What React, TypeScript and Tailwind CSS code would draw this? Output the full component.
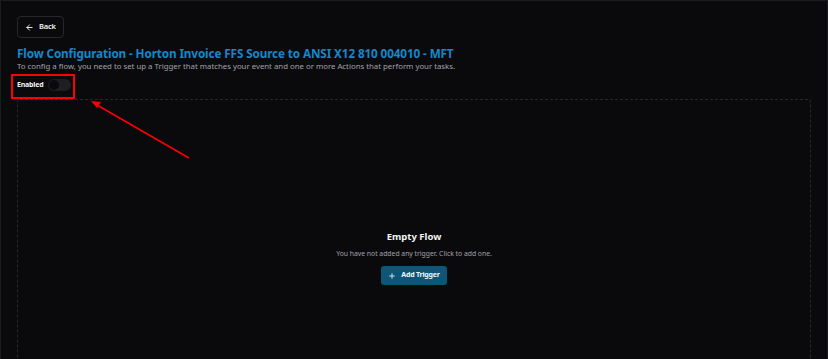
import React from "react";

function ArrowLeft() {
  return (
    <svg className="h-[9px] w-[9px]" viewBox="0 0 24 24" fill="none" stroke="currentColor" strokeWidth="2.5" strokeLinecap="round" strokeLinejoin="round">
      <path d="M19 12H5" />
      <path d="M12 19l-7-7 7-7" />
    </svg>
  );
}

function Plus() {
  return (
    <svg className="h-[8px] w-[8px]" viewBox="0 0 24 24" fill="none" stroke="currentColor" strokeWidth="2.5" strokeLinecap="round">
      <path d="M12 5v14" />
      <path d="M5 12h14" />
    </svg>
  );
}

export default function App() {
  return (
    <div
      className="relative h-[359px] w-[828px] overflow-hidden border-l border-r border-t border-[#1c1c20] bg-[#0a0a0c] text-white"
      style={{ fontFamily: '"Noto Sans", "Open Sans", sans-serif' }}
    >
      <div className="flex h-full flex-col px-[16px] pt-[15px]">
        <div>
          <button className="flex h-[22px] items-center gap-[5px] rounded-[4px] border border-[#27272a] px-[7px] text-[7.5px] font-semibold tracking-[-0.2px] text-zinc-100">
            <ArrowLeft />
            Back
          </button>
        </div>

        <h1 className="mt-[7px] text-[11.7px] font-bold leading-[16px] tracking-[-0.1px] text-[#1488cb]">
          Flow Configuration - Horton Invoice FFS Source to ANSI X12 810 004010 - MFT
        </h1>
        <p className="text-[7.8px] leading-[11px] text-[#a1a1aa]">
          To config a flow, you need to set up a Trigger that matches your event and one or more Actions that perform your tasks.
        </p>

        <div className="mt-[7px] flex items-center gap-[5px]">
          <span className="text-[7px] font-bold tracking-[-0.2px] text-zinc-100">Enabled</span>
          <span className="relative h-[12px] w-[23px] rounded-full bg-[#1f1f23]">
            <span className="absolute left-[1px] top-[1px] h-[10px] w-[10px] rounded-full bg-[#0a0a0c]" />
          </span>
        </div>

        <div className="mt-[8px] flex flex-1 flex-col items-center rounded-t-[3px] border border-b-0 border-dashed border-[#27272a] pt-[130px]">
          <h2 className="text-[9.5px] font-bold leading-[14px] text-zinc-100">Empty Flow</h2>
          <p className="mt-[5px] text-[6.8px] leading-[10px] text-[#a1a1aa]">
            You have not added any trigger. Click to add one.
          </p>
          <button className="mt-[7px] flex h-[19px] items-center gap-[5px] rounded-[3px] bg-[#0d5677] px-[7px] text-[7px] font-bold tracking-[-0.2px] text-zinc-100">
            <Plus />
            Add Trigger
          </button>
        </div>
      </div>

      {/* annotation */}
      <div className="absolute left-[10px] top-[73px] h-[25px] w-[64px] border-2 border-[#ff0000]" />
      <svg className="absolute left-0 top-0" width="828" height="359" viewBox="0 0 828 359">
        <line x1="188" y1="157" x2="96" y2="104" stroke="#ff0000" strokeWidth="1.5" />
        <polygon points="90,100 100,101 96,107" fill="#ff0000" />
      </svg>
    </div>
  );
}
